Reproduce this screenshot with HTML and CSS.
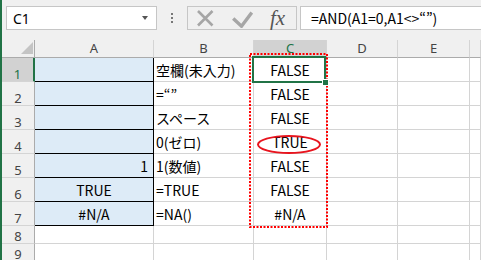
FILE: index.html
```html
<!DOCTYPE html>
<html lang="ja">
<head>
    <meta charset="UTF-8">
    <title>AND関数</title>
    <link rel="stylesheet" href="styles.css">
</head>
<body>
<div class="app">
    <div class="bar">
        <div class="namebox"><span>C1</span><span class="arrow"></span></div>
        <div class="grip"><i></i><i></i><i></i></div>
        <div class="fbtns">
            <svg class="ico-x" width="18" height="18" viewBox="0 0 18 18"><path d="M2 2L16.5 16.5M16.5 2L2 16.5" stroke="#a6a6a6" stroke-width="2.6" fill="none"/></svg>
            <svg class="ico-ok" width="21" height="17" viewBox="0 0 21 17"><path d="M1.2 7.5L9.5 15.2L19.8 1.5" stroke="#a6a6a6" stroke-width="3.4" fill="none"/></svg>
            <span class="fx">fx</span>
        </div>
        <div class="formula">=AND(A1=0,A1&lt;&gt;“”)</div>
    </div>

    <div class="sheet">
        <!-- 見出し -->
        <div class="corner"><svg width="12" height="12" viewBox="0 0 12 12"><path d="M12 0V12H0Z" fill="#c4c4c4"/></svg></div>
        <div class="ch">A</div>
        <div class="ch">B</div>
        <div class="ch on">C</div>
        <div class="ch">D</div>
        <div class="ch">E</div>
        <div class="ch"></div>

        <div class="rh on">1</div>
        <div class="cell a"></div>
        <div class="cell">空欄(未入力)</div>
        <div class="cell ctr">FALSE</div>
        <div class="cell"></div><div class="cell"></div><div class="cell"></div>

        <div class="rh">2</div>
        <div class="cell a"></div>
        <div class="cell">=“”</div>
        <div class="cell ctr">FALSE</div>
        <div class="cell"></div><div class="cell"></div><div class="cell"></div>

        <div class="rh">3</div>
        <div class="cell a"></div>
        <div class="cell">スペース</div>
        <div class="cell ctr">FALSE</div>
        <div class="cell"></div><div class="cell"></div><div class="cell"></div>

        <div class="rh">4</div>
        <div class="cell a"></div>
        <div class="cell">0(ゼロ)</div>
        <div class="cell ctr">TRUE</div>
        <div class="cell"></div><div class="cell"></div><div class="cell"></div>

        <div class="rh">5</div>
        <div class="cell a num">1</div>
        <div class="cell">1(数値)</div>
        <div class="cell ctr">FALSE</div>
        <div class="cell"></div><div class="cell"></div><div class="cell"></div>

        <div class="rh">6</div>
        <div class="cell a ctr">TRUE</div>
        <div class="cell">=TRUE</div>
        <div class="cell ctr">FALSE</div>
        <div class="cell"></div><div class="cell"></div><div class="cell"></div>

        <div class="rh">7</div>
        <div class="cell a ctr">#N/A</div>
        <div class="cell">=NA()</div>
        <div class="cell ctr">#N/A</div>
        <div class="cell"></div><div class="cell"></div><div class="cell"></div>

        <div class="rh">8</div>
        <div class="cell"></div><div class="cell"></div><div class="cell"></div>
        <div class="cell"></div><div class="cell"></div><div class="cell"></div>

        <div class="rh">9</div>
        <div class="cell"></div><div class="cell"></div><div class="cell"></div>
        <div class="cell"></div><div class="cell"></div><div class="cell"></div>

        <!-- 重ねて描くもの -->
        <svg class="dots" width="79" height="175" viewBox="0 0 79 175"><rect x="1" y="1" width="77" height="173" fill="none" stroke="#f00" stroke-width="2" stroke-dasharray="2 1.5"/></svg>
        <div class="selbox"></div>
        <div class="handle"></div>
        <div class="ring"></div>
    </div>
</div>
</body>
</html>
```

FILE: styles.css
```css
html, body {
    margin: 0;
    overflow: hidden;
}
.app {
    height: 260px;
    border-left: 2px solid #217346;
    background: #f0f0f0;
    font-family: "Noto Sans", "Noto Sans CJK JP", sans-serif;
    color: #000;
}
.bar {
    display: flex;
    height: 40px;
    box-sizing: border-box;
    padding: 6px 0 0 4px;
}
.namebox {
    display: flex;
    align-items: center;
    width: 151px;
    height: 24px;
    box-sizing: border-box;
    border: 1px solid #c6c6c6;
    background: #fff;
    padding: 0 8px 0 6px;
    font-size: 14px;
}
.arrow {
    margin-left: auto;
    width: 0;
    height: 0;
    border-left: 3.5px solid transparent;
    border-right: 3.5px solid transparent;
    border-top: 4px solid #555;
}
.grip {
    display: flex;
    flex-direction: column;
    gap: 2px;
    padding-top: 7px;
    margin: 0 14px;
}
.grip i {
    width: 2px;
    height: 2px;
    background: #777;
}
.fbtns {
    display: flex;
    align-items: center;
    width: 110px;
    height: 24px;
    box-sizing: border-box;
    border: 1px solid #c6c6c6;
    padding-left: 8px;
}
.ico-ok {
    margin-left: 18px;
    margin-top: 3px;
}
.fx {
    margin-left: 17px;
    font: italic 21px "Liberation Serif", serif;
    color: #555;
    line-height: 20px;
}
.formula {
    flex: 1;
    margin: 0 -6px 0 3px;
    height: 24px;
    box-sizing: border-box;
    border: 1px solid #c6c6c6;
    background: #fff;
    padding-left: 10px;
    font: 14px/22px "Noto Sans CJK JP", sans-serif;
}

/* シート */
.sheet {
    position: relative;
    display: grid;
    grid-template-columns: 33px 119px 100px 73px 71px 72px 1fr;
    grid-template-rows: 18px repeat(7, 24px) 18px 18px;
    background: #fff;
}
.corner, .ch, .rh {
    background: #f0f0f0;
    box-sizing: border-box;
    font-size: 13px;
    color: #444;
    display: flex;
    justify-content: center;
}
.corner {
    border-right: 1px solid #ababab;
    border-bottom: 1px solid #ababab;
    justify-content: flex-end;
    align-items: flex-end;
    padding: 0 1px 3px 0;
}
.ch {
    align-items: center;
    line-height: 17px;
    border-right: 1px solid #d4d4d4;
    border-bottom: 1px solid #ababab;
}
.ch.on {
    background: #d2d2d2;
    color: #217346;
    border-bottom: 2px solid #217346;
}
.rh {
    align-items: flex-end;
    line-height: 14px;
    border-right: 1px solid #ababab;
    border-bottom: 1px solid #d4d4d4;
}
.rh.on {
    background: #d2d2d2;
    color: #217346;
    border-right: 2px solid #217346;
}
.cell {
    display: flex;
    align-items: flex-end;
    box-sizing: border-box;
    border-right: 1px solid #d4d4d4;
    border-bottom: 1px solid #d4d4d4;
    padding: 0 2px 1px;
    font: 14px/20px "Noto Sans CJK JP", sans-serif;
    white-space: nowrap;
    overflow: hidden;
}
.cell.a {
    background: #ddebf7;
    border-right-color: #000;
    border-bottom-color: #000;
}
.ctr {
    justify-content: center;
}
.num {
    justify-content: flex-end;
    padding-right: 5px;
}
.dots {
    position: absolute;
    left: 247px;
    top: 13px;
}
.selbox {
    position: absolute;
    left: 250px;
    top: 16px;
    width: 74px;
    height: 27px;
    box-sizing: border-box;
    border: 2px solid #217346;
}
.handle {
    position: absolute;
    left: 320px;
    top: 39px;
    width: 5px;
    height: 5px;
    background: #217346;
    border: 1px solid #fff;
}
.ring {
    position: absolute;
    left: 255px;
    top: 95px;
    width: 64px;
    height: 19px;
    box-sizing: border-box;
    border: 2px solid #e8141e;
    border-radius: 50%;
}
```
